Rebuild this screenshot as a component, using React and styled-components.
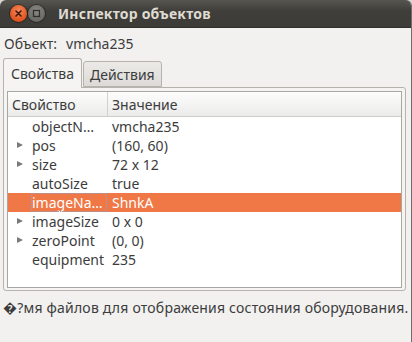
import React from "react";
import styled, { createGlobalStyle } from "styled-components";

const GlobalStyle = createGlobalStyle`
    html, body {
        margin: 0;
        padding: 0;
        background: #d8d6d2;
    }
    body {
        font-family: "Noto Sans", "DejaVu Sans", sans-serif;
        font-size: 14px;
        color: #3c3c3c;
    }
`;

const Window = styled.div`
    width: 412px;
    height: 342px;
    box-sizing: border-box;
    display: flex;
    flex-direction: column;
    background: #f2f1f0;
    border-right: 1px solid #6e6d69;
    border-radius: 6px 6px 0 0;
    overflow: hidden;
`;

const TitleBar = styled.div`
    height: 28px;
    flex: none;
    display: flex;
    align-items: center;
    padding-left: 10px;
    background: linear-gradient(#57554f, #3f3e3a 40%, #3c3b37);
    border-bottom: 1px solid #2f2e2b;
    box-sizing: border-box;
`;

const WinButton = styled.div`
    width: 17px;
    height: 17px;
    border-radius: 50%;
    margin-right: 1px;
    display: flex;
    align-items: center;
    justify-content: center;
    box-shadow: 0 0 0 1px rgba(0, 0, 0, 0.35);
    background: ${p => p.$close
        ? "radial-gradient(circle at 50% 35%, #f6875a, #e0531f 70%, #c8461a)"
        : "radial-gradient(circle at 50% 35%, #8a8984, #6a6964 70%, #5a5955)"};
`;

const Title = styled.div`
    margin-left: 12px;
    font-weight: bold;
    font-size: 14px;
    color: #dfdbd2;
    letter-spacing: 0.2px;
`;

const ObjectRow = styled.div`
    display: flex;
    gap: 9px;
    padding: 7px 0 0 4px;
    line-height: 18px;
    height: 18px;
`;

const TabBar = styled.div`
    display: flex;
    align-items: flex-end;
    margin-top: 5px;
    padding-left: 3px;
    height: 30px;
    position: relative;
    z-index: 1;
    margin-bottom: -1px;
`;

const Tab = styled.div`
    box-sizing: border-box;
    height: ${p => (p.$active ? "30px" : "26px")};
    padding: 0 ${p => (p.$active ? "7px" : "6px")};
    margin-bottom: ${p => (p.$active ? "0" : "1px")};
    display: flex;
    align-items: center;
    border: 1px solid #b6b3ad;
    border-bottom: ${p => (p.$active ? "none" : "1px solid #b6b3ad")};
    border-radius: 3px 3px 0 0;
    background: ${p => (p.$active ? "#f5f4f3" : "linear-gradient(#eceae7, #dddbd7)")};
    color: #3c3c3c;
    margin-left: ${p => (p.$active ? "0" : "1px")};
`;

const Notebook = styled.div`
    margin: 0 5px 0 3px;
    height: 204px;
    box-sizing: border-box;
    border: 1px solid #b6b3ad;
    border-radius: 0 3px 3px 3px;
    padding: 3px 3px 2px 3px;
    background: #f5f4f3;
`;

const Tree = styled.div`
    height: 100%;
    box-sizing: border-box;
    border: 1px solid #a9a7a3;
    background: #fff;
`;

const HeaderRow = styled.div`
    display: flex;
    height: 25px;
    box-sizing: border-box;
    background: linear-gradient(#fdfdfd, #ebebea);
    border-bottom: 1px solid #cfcdca;
`;

const HeaderCell = styled.div`
    width: ${p => p.$width || "auto"};
    flex: ${p => (p.$width ? "none" : "1")};
    box-sizing: border-box;
    padding-left: 4px;
    display: flex;
    align-items: center;
    border-right: ${p => (p.$width ? "1px solid #d3d1cd" : "none")};
`;

const Row = styled.div`
    display: flex;
    height: 19px;
    align-items: center;
    background: ${p => (p.$selected ? "#f07746" : "transparent")};
    color: ${p => (p.$selected ? "#fff" : "#3c3c3c")};
`;

const NameCell = styled.div`
    width: 99px;
    flex: none;
    height: 100%;
    box-sizing: border-box;
    display: flex;
    align-items: center;
    position: relative;
    padding-left: 24px;
    white-space: nowrap;
    overflow: hidden;
`;

const Focus = styled.div`
    position: absolute;
    left: 23px;
    top: 0;
    right: 0;
    bottom: 0;
    border: 1px dotted #8fa4c4;
`;

const Expander = styled.span`
    position: absolute;
    left: 9px;
    top: 6px;
    width: 0;
    height: 0;
    border-top: 3.5px solid transparent;
    border-bottom: 3.5px solid transparent;
    border-left: 6px solid #7a7a7a;
`;

const ValueCell = styled.div`
    padding-left: 5px;
    white-space: nowrap;
`;

const Status = styled.div`
    padding: 8px 0 0 3px;
    line-height: 18px;
    white-space: nowrap;
    letter-spacing: 0.2px;
`;

const rows = [
    { name: "objectN…", value: "vmcha235" },
    { name: "pos", value: "(160, 60)", expand: true },
    { name: "size", value: "72 x 12", expand: true },
    { name: "autoSize", value: "true" },
    { name: "imageNa…", value: "ShnkA", selected: true },
    { name: "imageSize", value: "0 x 0", expand: true },
    { name: "zeroPoint", value: "(0, 0)", expand: true },
    { name: "equipment", value: "235" },
];

const App = () => {
    return (
        <>
            <GlobalStyle />
            <Window>
                <TitleBar>
                    <WinButton $close>
                        <svg width="9" height="9" viewBox="0 0 9 9">
                            <path d="M2 2 L7 7 M7 2 L2 7" stroke="#3a1a0c" strokeWidth="1.6" strokeLinecap="round" />
                        </svg>
                    </WinButton>
                    <WinButton>
                        <svg width="9" height="9" viewBox="0 0 9 9">
                            <rect x="1.5" y="1.5" width="6" height="6" fill="none" stroke="#2e2e2c" strokeWidth="1.3" />
                        </svg>
                    </WinButton>
                    <Title>Инспектор объектов</Title>
                </TitleBar>
                <ObjectRow>
                    <span>Объект:</span>
                    <span>vmcha235</span>
                </ObjectRow>
                <TabBar>
                    <Tab $active>Свойства</Tab>
                    <Tab>Действия</Tab>
                </TabBar>
                <Notebook>
                    <Tree>
                        <HeaderRow>
                            <HeaderCell $width="100px">Свойство</HeaderCell>
                            <HeaderCell>Значение</HeaderCell>
                        </HeaderRow>
                        {rows.map(r => (
                            <Row key={r.name} $selected={r.selected}>
                                <NameCell>
                                    {r.expand && <Expander />}
                                    {r.selected && <Focus />}
                                    {r.name}
                                </NameCell>
                                <ValueCell>{r.value}</ValueCell>
                            </Row>
                        ))}
                    </Tree>
                </Notebook>
                <Status>�?мя файлов для отображения состояния оборудования.</Status>
            </Window>
        </>
    );
};

export default App;
